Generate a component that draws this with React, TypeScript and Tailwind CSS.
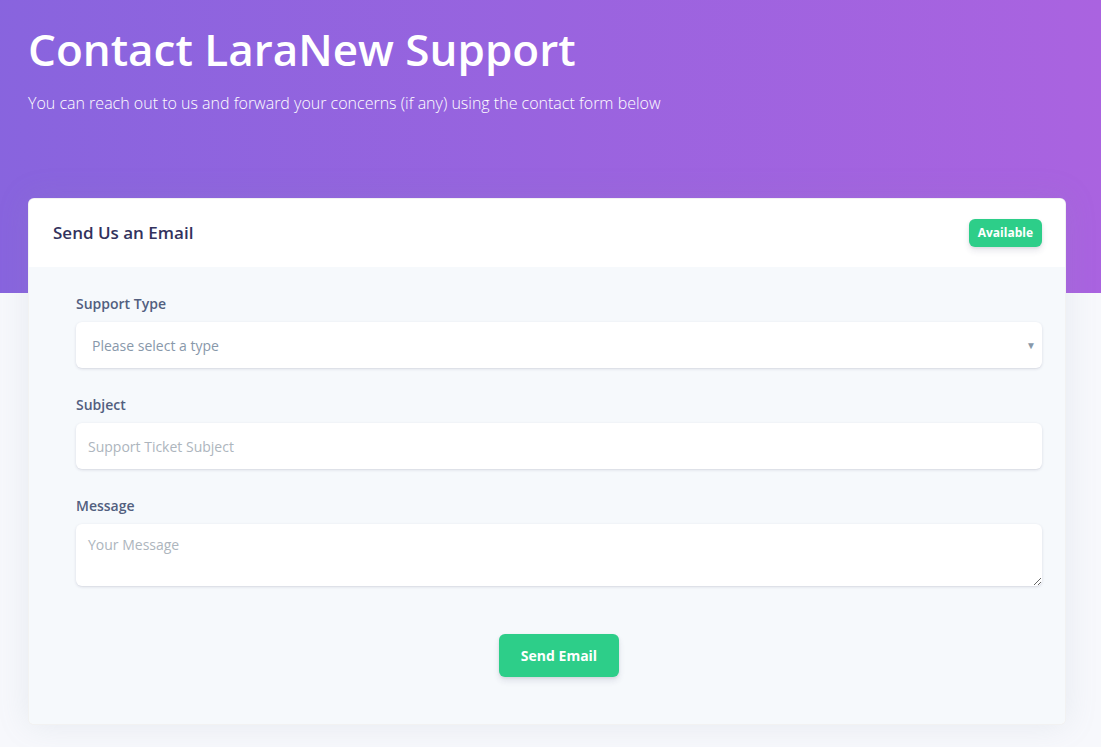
import React from 'react'

const labelCls = 'block text-[14px] font-semibold text-[#525f7f] mb-2 leading-[21px]'
const inputCls =
  'w-full h-[46px] rounded-md bg-white px-3 text-[14px] text-[#525f7f] placeholder:text-[#adb5bd] shadow-[0_1px_3px_rgba(50,50,93,0.15),0_1px_0_rgba(0,0,0,0.02)] outline-none border-0'

export default function App() {
  return (
    <div className="min-h-screen bg-[#f7f8fc] font-['Open_Sans',sans-serif]">
      {/* Header */}
      <header className="bg-[linear-gradient(87deg,#8864de,#aa63e0)] h-[293px] px-7 pt-[23px]">
        <h1 className="text-white text-[44px] font-semibold leading-[53px]">
          Contact LaraNew Support
        </h1>
        <p className="mt-[15px] text-white text-[16px] font-light leading-6">
          You can reach out to us and forward your concerns (if any) using the contact form below
        </p>
      </header>

      {/* Card */}
      <div className="pl-7 pr-[35px] -mt-[95px] pb-[23px]">
        <div className="rounded-md bg-white border border-black/5 shadow-[0_0_2rem_0_rgba(136,152,170,0.15)] overflow-hidden">
          <div className="h-[68px] flex items-center justify-between pl-6 pr-[23px] bg-white">
            <h3 className="text-[17px] font-semibold text-[#32325d]">Send Us an Email</h3>
            <span className="h-[28px] px-[9px] rounded-md bg-[#2dce89] text-white text-[12px] font-bold flex items-center shadow-[0_4px_6px_rgba(50,50,93,0.11),0_1px_3px_rgba(0,0,0,0.08)]">
              Available
            </span>
          </div>

          <div className="bg-[#f6f9fc] pt-[26px] pb-[47px] pr-[23px] pl-[47px]">
            <div className="mb-[26px]">
              <label className={labelCls}>Support Type</label>
              <div className="relative">
                <select
                  defaultValue=""
                  className={`${inputCls} appearance-none pl-4 text-[#8898aa]`}
                >
                  <option value="" disabled>
                    Please select a type
                  </option>
                  <option>Technical</option>
                  <option>Billing</option>
                </select>
                <span className="pointer-events-none absolute right-[6px] top-1/2 -translate-y-1/2 text-[10px] text-[#8898aa]">
                  ▼
                </span>
              </div>
            </div>

            <div className="mb-[26px]">
              <label className={labelCls}>Subject</label>
              <input className={inputCls} placeholder="Support Ticket Subject" />
            </div>

            <div className="mb-[24px]">
              <label className={labelCls}>Message</label>
              <textarea
                className={`${inputCls} h-[62px] py-[10px] block`}
                placeholder="Your Message"
              />
            </div>

            <div className="flex justify-center pt-[24px]">
              <button className="w-[120px] h-[43px] rounded-md bg-[#2dce89] text-white text-[14px] font-bold shadow-[0_4px_6px_rgba(50,50,93,0.11),0_1px_3px_rgba(0,0,0,0.08)]">
                Send Email
              </button>
            </div>
          </div>
        </div>
      </div>
    </div>
  )
}
